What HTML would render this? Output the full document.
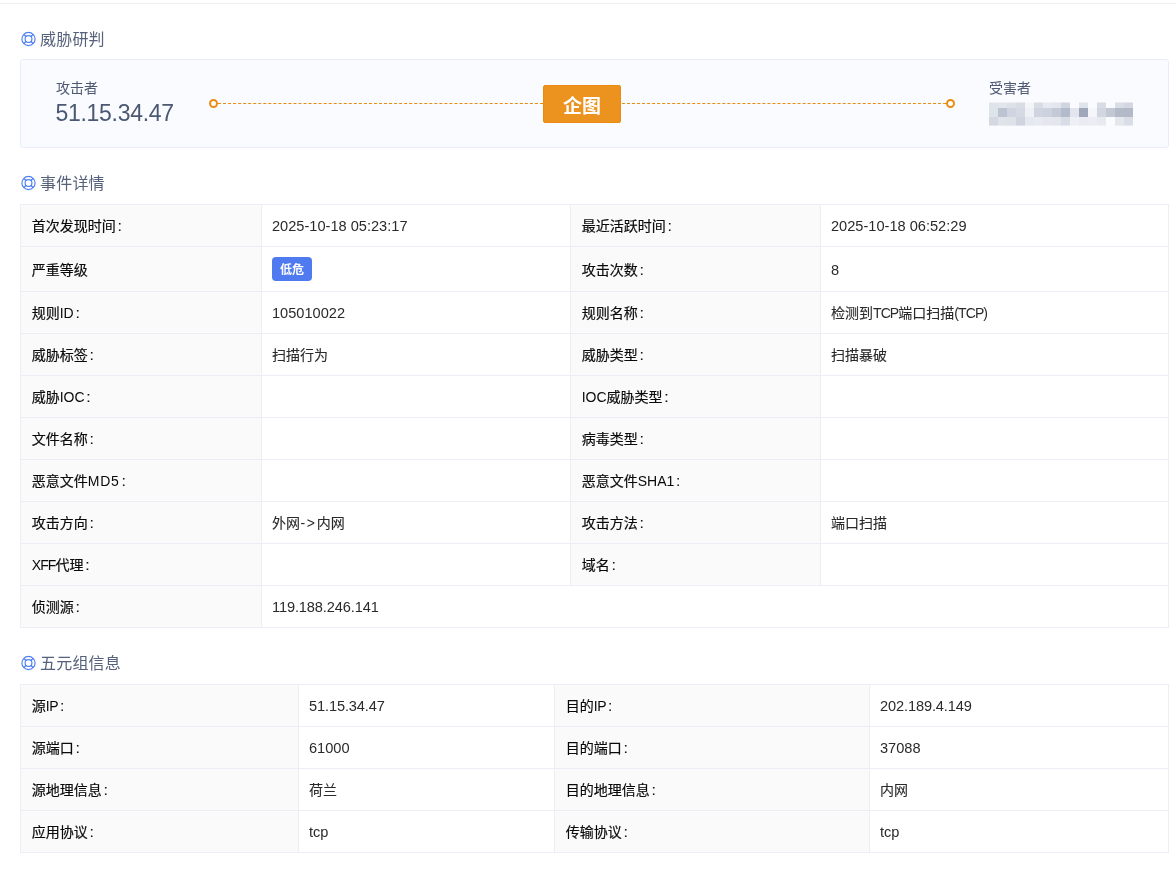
<!DOCTYPE html>
<html lang="zh-CN">
<head>
<meta charset="utf-8">
<title>威胁研判</title>
<style>
*{box-sizing:border-box;margin:0;padding:0}
html,body{width:1176px;height:876px;background:#fff;overflow:hidden}
body{position:relative;font-family:"Liberation Sans","Noto Sans CJK SC",sans-serif;font-size:14px;color:#262626}
.wrap{position:absolute;left:0;top:0;width:1176px;height:876px;will-change:transform}
.topline{position:absolute;left:0;top:3px;width:1176px;height:1px;background:#efefef}
.sec{position:absolute;left:20px;height:24px;line-height:24px;font-size:16px;color:#56617b;white-space:nowrap}
.sec svg{position:absolute;left:0;top:3px}
.sec span{position:absolute;left:20px;top:0;letter-spacing:0.2px}
.panel{position:absolute;left:20px;top:59px;width:1149px;height:89px;border:1px solid #e8ecfc;border-radius:3px;background:#fafbfe}
.who{position:absolute;font-size:14px;line-height:20px;color:#4d5872;white-space:nowrap}
.ip{position:absolute;font-size:23px;line-height:28px;color:#4a5873;letter-spacing:-0.3px;white-space:nowrap}
.dash{position:absolute;top:103px;height:0;border-top:1px dashed #ea8c10}
.dot{position:absolute;width:9px;height:9px;border:2px solid #ea8c10;border-radius:50%;background:#fff}
.btn{position:absolute;left:543px;top:85px;width:78px;height:38px;border-radius:2px;border:1px solid #ea8c10;background:#ec931f;color:#fff;font-size:19px;font-weight:bold;text-align:center;line-height:42px}
table{position:absolute;left:20px;width:1148px;border-collapse:collapse;table-layout:fixed}
td{border:1px solid #ebeef5;height:42px;padding:0 0 0 10px;font-size:14px;line-height:20px;vertical-align:middle;white-space:nowrap;color:#2a2a2a;-webkit-text-stroke:0.12px #2a2a2a}
td.l{background:#fafafa;color:#0a0a0a;padding-left:10.7px;-webkit-text-stroke:0.18px #0a0a0a}
.tag{-webkit-text-stroke:0;display:inline-block;width:40px;height:24px;line-height:26px;border-radius:4px;background:#4f7af0;color:#fff;font-size:12px;font-weight:bold;text-align:center;vertical-align:middle}
.n{font-size:14.6px;-webkit-text-stroke:0}
.p{letter-spacing:-0.12px}
i{font-style:normal;margin-left:2px}
b{font-weight:normal;-webkit-text-stroke:0}
.mosaic{position:absolute;left:989px;top:99px;width:144px;height:27px}
</style>
</head>
<body>
<div class="wrap">
<div class="topline"></div>

<div class="sec" style="top:28px"><svg width="17" height="16" viewBox="0 0 17 16"><g fill="none" stroke="#5080f5"><circle cx="8.5" cy="8" r="6.6" stroke-width="1.15"/><circle cx="8.5" cy="8" r="3.4" stroke-width="1.15"/><path stroke-width="1.35" d="M6.1 5.6L3.9 3.4M10.9 5.6L13.1 3.4M6.1 10.4L3.9 12.6M10.9 10.4L13.1 12.6"/></g></svg><span>威胁研判</span></div>

<div class="panel"></div>
<div class="who" style="left:56px;top:78px">攻击者</div>
<div class="ip" style="left:55.5px;top:99px">51.15.34.47</div>
<div class="dash" style="left:218px;width:325px"></div>
<div class="dash" style="left:622px;width:324px"></div>
<div class="dot" style="left:209px;top:99px"></div>
<div class="dot" style="left:946px;top:99px"></div>
<div class="btn">企图</div>
<div class="who" style="left:989px;top:78px">受害者</div>
<svg class="mosaic" viewBox="0 0 144 27"><rect x="0" y="3.5" width="9" height="5.5" fill="#dfe3ea"/><rect x="0" y="9" width="9" height="9" fill="#dfe3ea"/><rect x="0" y="18" width="9" height="8.6" fill="#d3d8e2"/><rect x="9" y="3.5" width="9" height="5.5" fill="#e1e5ec"/><rect x="9" y="9" width="9" height="9" fill="#bcc3d1"/><rect x="9" y="18" width="9" height="8.6" fill="#dfe3ea"/><rect x="18" y="3.5" width="9" height="5.5" fill="#dde1e8"/><rect x="18" y="9" width="9" height="9" fill="#cfd5e0"/><rect x="18" y="18" width="9" height="8.6" fill="#dde1e8"/><rect x="27" y="3.5" width="9" height="5.5" fill="#d8dce5"/><rect x="27" y="9" width="9" height="9" fill="#d5d9e3"/><rect x="27" y="18" width="9" height="8.6" fill="#cfd4df"/><rect x="36" y="3.5" width="9" height="5.5" fill="#f3f5f9"/><rect x="36" y="9" width="9" height="9" fill="#eef1f5"/><rect x="36" y="18" width="9" height="8.6" fill="#e4e8ef"/><rect x="45" y="3.5" width="9" height="5.5" fill="#d8dce5"/><rect x="45" y="9" width="9" height="9" fill="#cfd4df"/><rect x="45" y="18" width="9" height="8.6" fill="#e7eaf1"/><rect x="54" y="3.5" width="9" height="5.5" fill="#e6e9f0"/><rect x="54" y="9" width="9" height="9" fill="#cdd3de"/><rect x="54" y="18" width="9" height="8.6" fill="#e4e7ee"/><rect x="63" y="3.5" width="9" height="5.5" fill="#e3e6ed"/><rect x="63" y="9" width="9" height="9" fill="#c3c9d6"/><rect x="63" y="18" width="9" height="8.6" fill="#e3e6ed"/><rect x="72" y="3.5" width="9" height="5.5" fill="#d0d5df"/><rect x="72" y="9" width="9" height="9" fill="#b3bac9"/><rect x="72" y="18" width="9" height="8.6" fill="#d8dce6"/><rect x="81" y="9" width="9" height="9" fill="#e3e6ee"/><rect x="81" y="18" width="9" height="8.6" fill="#eef0f5"/><rect x="90" y="3.5" width="9" height="5.5" fill="#dfe3eb"/><rect x="90" y="9" width="9" height="9" fill="#9fa8ba"/><rect x="90" y="18" width="9" height="8.6" fill="#e9ecf2"/><rect x="99" y="9" width="9" height="9" fill="#f5f6fa"/><rect x="99" y="18" width="9" height="8.6" fill="#ebedf3"/><rect x="108" y="3.5" width="9" height="5.5" fill="#d8dce5"/><rect x="108" y="9" width="9" height="9" fill="#d2d6e0"/><rect x="108" y="18" width="9" height="8.6" fill="#e7eaf1"/><rect x="117" y="9" width="9" height="9" fill="#c3c8d5"/><rect x="126" y="3.5" width="9" height="5.5" fill="#d9dde6"/><rect x="126" y="9" width="9" height="9" fill="#b3bac8"/><rect x="126" y="18" width="9" height="8.6" fill="#e4e7ee"/><rect x="135" y="3.5" width="9" height="5.5" fill="#d3d7e1"/><rect x="135" y="9" width="9" height="9" fill="#b3b9c8"/><rect x="135" y="18" width="9" height="8.6" fill="#d9dde6"/></svg>

<div class="sec" style="top:172px"><svg width="17" height="16" viewBox="0 0 17 16"><g fill="none" stroke="#5080f5"><circle cx="8.5" cy="8" r="6.6" stroke-width="1.15"/><circle cx="8.5" cy="8" r="3.4" stroke-width="1.15"/><path stroke-width="1.35" d="M6.1 5.6L3.9 3.4M10.9 5.6L13.1 3.4M6.1 10.4L3.9 12.6M10.9 10.4L13.1 12.6"/></g></svg><span>事件详情</span></div>

<table style="top:204px">
<colgroup><col style="width:241px"><col style="width:309px"><col style="width:250px"><col style="width:348px"></colgroup>
<tr><td class="l">首次发现时间<i>:</i></td><td class="n">2025-10-18 05:23:17</td><td class="l">最近活跃时间<i>:</i></td><td class="n">2025-10-18 06:52:29</td></tr>
<tr style="height:45px"><td class="l" style="height:45px;padding-top:2px">严重等级</td><td><span class="tag">低危</span></td><td class="l" style="padding-top:2px">攻击次数<i>:</i></td><td class="n" style="padding-top:2px">8</td></tr>
<tr><td class="l">规则<b>ID</b><i>:</i></td><td class="n">105010022</td><td class="l">规则名称<i>:</i></td><td>检测到<b style="letter-spacing:-0.9px">TCP</b>端口扫描<b style="letter-spacing:-0.9px">(TCP)</b></td></tr>
<tr><td class="l">威胁标签<i>:</i></td><td>扫描行为</td><td class="l">威胁类型<i>:</i></td><td>扫描暴破</td></tr>
<tr><td class="l">威胁<b>IOC</b><i>:</i></td><td></td><td class="l"><b>IOC</b>威胁类型<i>:</i></td><td></td></tr>
<tr><td class="l">文件名称<i>:</i></td><td></td><td class="l">病毒类型<i>:</i></td><td></td></tr>
<tr><td class="l">恶意文件<b style="letter-spacing:0.8px">MD5</b><i>:</i></td><td></td><td class="l">恶意文件<b>SHA1</b><i>:</i></td><td></td></tr>
<tr><td class="l">攻击方向<i>:</i></td><td>外网<b style="letter-spacing:1.7px;margin-left:0.4px">-&gt;</b>内网</td><td class="l">攻击方法<i>:</i></td><td>端口扫描</td></tr>
<tr><td class="l"><b style="letter-spacing:-0.9px">XFF</b>代理<i>:</i></td><td></td><td class="l">域名<i>:</i></td><td></td></tr>
<tr><td class="l">侦测源<i>:</i></td><td colspan="3" class="n p">119.188.246.141</td></tr>
</table>

<div class="sec" style="top:652px"><svg width="17" height="16" viewBox="0 0 17 16"><g fill="none" stroke="#5080f5"><circle cx="8.5" cy="8" r="6.6" stroke-width="1.15"/><circle cx="8.5" cy="8" r="3.4" stroke-width="1.15"/><path stroke-width="1.35" d="M6.1 5.6L3.9 3.4M10.9 5.6L13.1 3.4M6.1 10.4L3.9 12.6M10.9 10.4L13.1 12.6"/></g></svg><span>五元组信息</span></div>

<table style="top:684px">
<colgroup><col style="width:278px"><col style="width:256px"><col style="width:315px"><col style="width:299px"></colgroup>
<tr><td class="l">源<b style="letter-spacing:-0.3px">IP</b><i>:</i></td><td class="n p">51.15.34.47</td><td class="l">目的<b style="letter-spacing:-0.3px">IP</b><i>:</i></td><td class="n p">202.189.4.149</td></tr>
<tr><td class="l">源端口<i>:</i></td><td class="n">61000</td><td class="l">目的端口<i>:</i></td><td class="n">37088</td></tr>
<tr><td class="l">源地理信息<i>:</i></td><td>荷兰</td><td class="l">目的地理信息<i>:</i></td><td>内网</td></tr>
<tr><td class="l">应用协议<i>:</i></td><td class="n">tcp</td><td class="l">传输协议<i>:</i></td><td class="n">tcp</td></tr>
</table>
</div>
</body>
</html>
